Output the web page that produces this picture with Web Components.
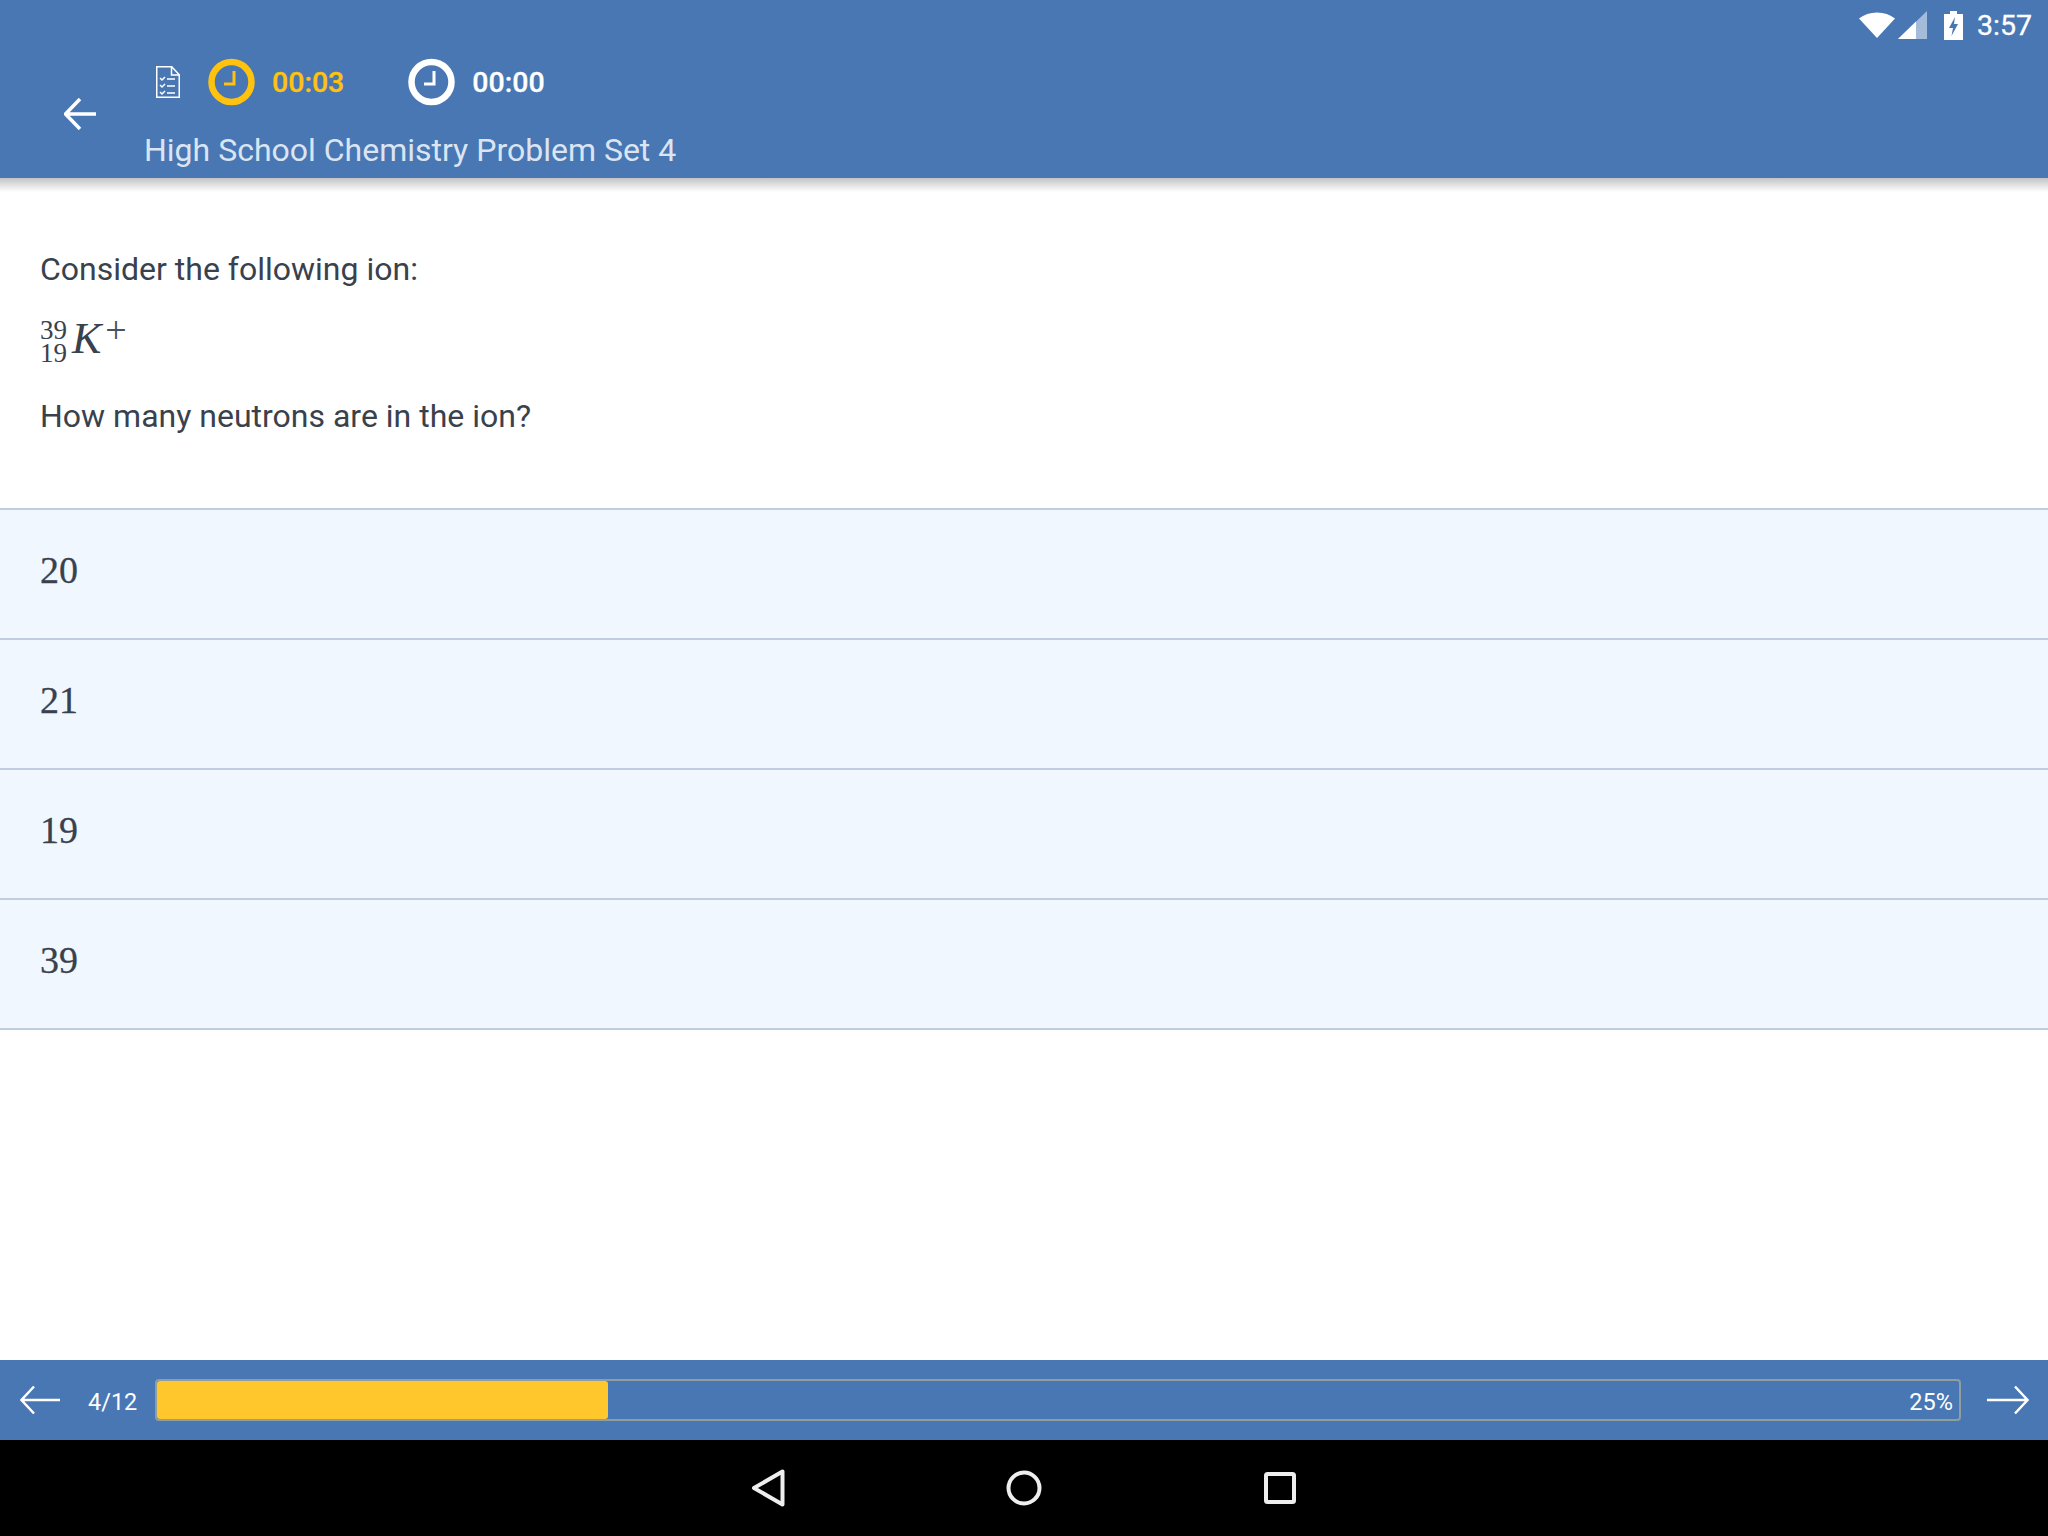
<!DOCTYPE html>
<html lang="en">
<head>
<meta charset="utf-8">
<title>High School Chemistry Problem Set 4</title>
<style>
  html, body { margin: 0; height: 100%; }
  body {
    display: flex; flex-direction: column; width: 2048px; height: 1536px; overflow: hidden;
    background: #fff; color: #39414d; font-family: Roboto, "Liberation Sans", sans-serif;
  }
</style>
</head>
<body>
<quiz-header title-text="High School Chemistry Problem Set 4" elapsed="00:03" limit="00:00"></quiz-header>
<quiz-question>
  <span slot="intro">Consider the following ion:</span>
  <isotope-symbol slot="math" mass="39" number="19" element="K" charge="+"></isotope-symbol>
  <span slot="ask">How many neutrons are in the ion?</span>
</quiz-question>
<answer-list>
  <answer-row>20</answer-row>
  <answer-row>21</answer-row>
  <answer-row>19</answer-row>
  <answer-row>39</answer-row>
</answer-list>
<quiz-progress position="4/12" percent="25"></quiz-progress>
<nav-bar></nav-bar>

<script>
/* top status bar: wifi, signal, battery, clock */
class StatusBar extends HTMLElement {
  constructor() {
    super();
    this.attachShadow({ mode: 'open' }).innerHTML = `
      <style>
        :host { display: flex; height: 50px; align-items: center; justify-content: flex-end; padding-right: 16px; color: #fff; }
        svg { display: block; }
        .time { font-size: 28.500px; margin-left: 14px; line-height: 50px; position: relative; top: 1px; -webkit-text-stroke: .3px #fff; }
      </style>
      <svg width="36" height="26" viewBox="0 0 36 26" style="margin-right:3px"><path d="M0 6.500C5 2.500 11 .5 18 .5s13 2 18 6L18 26z" fill="#fff"/></svg>
      <svg width="30" height="28" viewBox="0 0 30 28" style="margin-right:16px"><path d="M0 28 29 0v28z" fill="#fff" opacity=".5"/><path d="M0 28 18 10.500V28z" fill="#fff"/></svg>
      <svg width="19" height="29" viewBox="0 0 19 29"><path d="M6 0h7v3h6v26H0V3h6z" fill="#fff"/><path d="M11 6 5 17h4l-1.500 8L14 13h-4z" fill="#4877b4"/></svg>
      <span class="time">3:57</span>`;
  }
}
customElements.define('status-bar', StatusBar);

/* clock ring plus its time text */
class TimerChip extends HTMLElement {
  constructor() {
    super();
    const color = this.getAttribute('color') || '#fff';
    this.attachShadow({ mode: 'open' }).innerHTML = `
      <style>
        :host { display: flex; align-items: center; gap: 17px; color: ${color}; }
        svg { display: block; }
        span { font-size: 28.500px; font-weight: 500; line-height: 48px; margin-top: 2px; -webkit-text-stroke: .3px ${color}; }
      </style>
      <svg width="47" height="48" viewBox="0 0 47 48">
        <circle cx="23.500" cy="24" r="20" fill="none" stroke="${color}" stroke-width="6.500"/>
        <path d="M26 13v13H16" fill="none" stroke="${color}" stroke-width="3"/>
      </svg>
      <span><slot></slot></span>`;
  }
}
customElements.define('timer-chip', TimerChip);

class QuizHeader extends HTMLElement {
  constructor() {
    super();
    const title = this.getAttribute('title-text');
    this.attachShadow({ mode: 'open' }).innerHTML = `
      <style>
        :host { display: block; flex: none; }
        .bar { background: #4877b4; height: 178px; color: #fff; }
        .main { display: flex; height: 128px; align-items: center; }
        .back { display: block; margin-left: 64px; margin-right: 48px; flex: none; }
        .content { margin-bottom: 4px; }
        .timers { display: flex; align-items: center; height: 48px; padding-left: 12px; }
        .doc { display: block; margin-right: 28px; }
        timer-chip + timer-chip { margin-left: 64px; }
        .title { font-size: 32px; line-height: 44px; color: #dbe5f2; white-space: nowrap; margin-top: 22px; margin-bottom: -6px; }
        .shade { height: 14px; background: linear-gradient(#c4c4c4, #ffffff); }
      </style>
      <div class="bar">
        <status-bar></status-bar>
        <div class="main">
          <svg class="back" width="32" height="32" viewBox="0 0 32 32"><path d="M32 16H2M16 1 1.500 16 16 31" fill="none" stroke="#fff" stroke-width="3.500"/></svg>
          <div class="content">
            <div class="timers">
              <svg class="doc" width="24" height="32" viewBox="0 0 24 32" fill="none" stroke="#fff">
                <path d="M.75.75h15l7.500 8v22.500H.75zM15.500 1v8h8" stroke-width="1.500"/>
                <path d="M4 12l2 2 3-3M4 19l2 2 3-3M4 26l2 2 3-3" stroke-width="1.500"/>
                <path d="M11 13h8M11 20h8M11 27h8" stroke-width="1.500"/>
              </svg>
              <timer-chip color="#ffc20e">${this.getAttribute('elapsed')}</timer-chip>
              <timer-chip color="#fff">${this.getAttribute('limit')}</timer-chip>
            </div>
            <div class="title">${title}</div>
          </div>
        </div>
      </div>
      <div class="shade"></div>`;
  }
}
customElements.define('quiz-header', QuizHeader);

class IsotopeSymbol extends HTMLElement {
  constructor() {
    super();
    this.attachShadow({ mode: 'open' }).innerHTML = `
      <style>
        :host { display: inline-flex; align-items: flex-start; font-family: "Liberation Serif", "Times New Roman", serif; color: #39414d; height: 46px; }
        .stack { display: flex; flex-direction: column; font-size: 27px; line-height: 23px; }
        .el { font-style: italic; font-size: 44px; line-height: 40px; margin-left: 5px; }
        .ch { font-size: 38px; line-height: 22px; margin-left: 4px; font-weight: 400; color: #4a525e; }
      </style>
      <div class="stack"><span>${this.getAttribute('mass')}</span><span>${this.getAttribute('number')}</span></div>
      <span class="el">${this.getAttribute('element')}</span>
      <span class="ch">${this.getAttribute('charge')}</span>`;
  }
}
customElements.define('isotope-symbol', IsotopeSymbol);

class QuizQuestion extends HTMLElement {
  constructor() {
    super();
    this.attachShadow({ mode: 'open' }).innerHTML = `
      <style>
        :host { display: flex; flex-direction: column; flex: none; height: 316px; padding: 55px 40px 0; box-sizing: border-box; font-size: 32px; color: #39414d; }
        .line { line-height: 44px; }
        .math { height: 46px; margin: 18px 0 39px; }
      </style>
      <div class="line"><slot name="intro"></slot></div>
      <div class="math"><slot name="math"></slot></div>
      <div class="line"><slot name="ask"></slot></div>`;
  }
}
customElements.define('quiz-question', QuizQuestion);

class AnswerList extends HTMLElement {
  constructor() {
    super();
    this.attachShadow({ mode: 'open' }).innerHTML = `
      <style>:host { display: block; flex: none; border-top: 2px solid #bfcde0; }</style>
      <slot></slot>`;
  }
}
customElements.define('answer-list', AnswerList);

class AnswerRow extends HTMLElement {
  constructor() {
    super();
    this.attachShadow({ mode: 'open' }).innerHTML = `
      <style>
        :host { display: flex; align-items: center; height: 120px; padding: 0 0 8px 40px; background: #f0f7ff; border-bottom: 2px solid #bfcde0;
                font-family: "Liberation Serif", "Times New Roman", serif; font-size: 38px; color: #39414d; -webkit-text-stroke: .3px #39414d; }
      </style>
      <slot></slot>`;
  }
}
customElements.define('answer-row', AnswerRow);

class QuizProgress extends HTMLElement {
  constructor() {
    super();
    const pct = Number(this.getAttribute('percent'));
    this.attachShadow({ mode: 'open' }).innerHTML = `
      <style>
        :host { display: flex; align-items: center; flex: none; height: 80px; margin-top: auto; background: #4877b4; color: #fff; }
        svg { display: block; flex: none; }
        .pos { width: 49px; margin: 4px 18px 0 28px; white-space: nowrap; font-size: 23.500px; }
        .track { display: grid; width: 1806px; height: 42px; box-sizing: border-box; border: 2px solid #8f9f9f; border-radius: 4px; }
        .track > * { grid-area: 1 / 1; }
        .fill { width: ${pct}%; background: #ffc72c; border-radius: 3px; }
        .pct { justify-self: end; align-self: center; padding-right: 6px; padding-top: 4px; font-size: 23.500px; }
      </style>
      <svg width="40" height="30" viewBox="0 0 40 30" style="margin-left:20px"><path d="M40 15H2M14 1.500 1.500 15 14 28.500" fill="none" stroke="#fff" stroke-width="2.500"/></svg>
      <span class="pos">${this.getAttribute('position')}</span>
      <div class="track"><div class="fill"></div><span class="pct">${pct}%</span></div>
      <svg width="42" height="30" viewBox="0 0 42 30" style="margin-left:26px"><path d="M0 15h40M28 1.500 40.500 15 28 28.500" fill="none" stroke="#fff" stroke-width="2.500"/></svg>`;
  }
}
customElements.define('quiz-progress', QuizProgress);

class NavBar extends HTMLElement {
  constructor() {
    super();
    this.attachShadow({ mode: 'open' }).innerHTML = `
      <style>
        :host { display: flex; align-items: center; justify-content: center; flex: none; height: 96px; background: #000; }
        div { width: 256px; display: flex; justify-content: center; }
        svg { display: block; }
      </style>
      <div><svg width="36" height="40" viewBox="0 0 36 40"><path d="M32.500 3.500v33L4 20z" fill="none" stroke="#eee" stroke-width="4" stroke-linejoin="round"/></svg></div>
      <div><svg width="36" height="36" viewBox="0 0 36 36"><circle cx="18" cy="18" r="15.500" fill="none" stroke="#eee" stroke-width="4"/></svg></div>
      <div><svg width="32" height="32" viewBox="0 0 32 32"><rect x="2" y="2" width="28" height="28" rx="1.500" fill="none" stroke="#eee" stroke-width="4"/></svg></div>`;
  }
}
customElements.define('nav-bar', NavBar);
</script>
</body>
</html>
